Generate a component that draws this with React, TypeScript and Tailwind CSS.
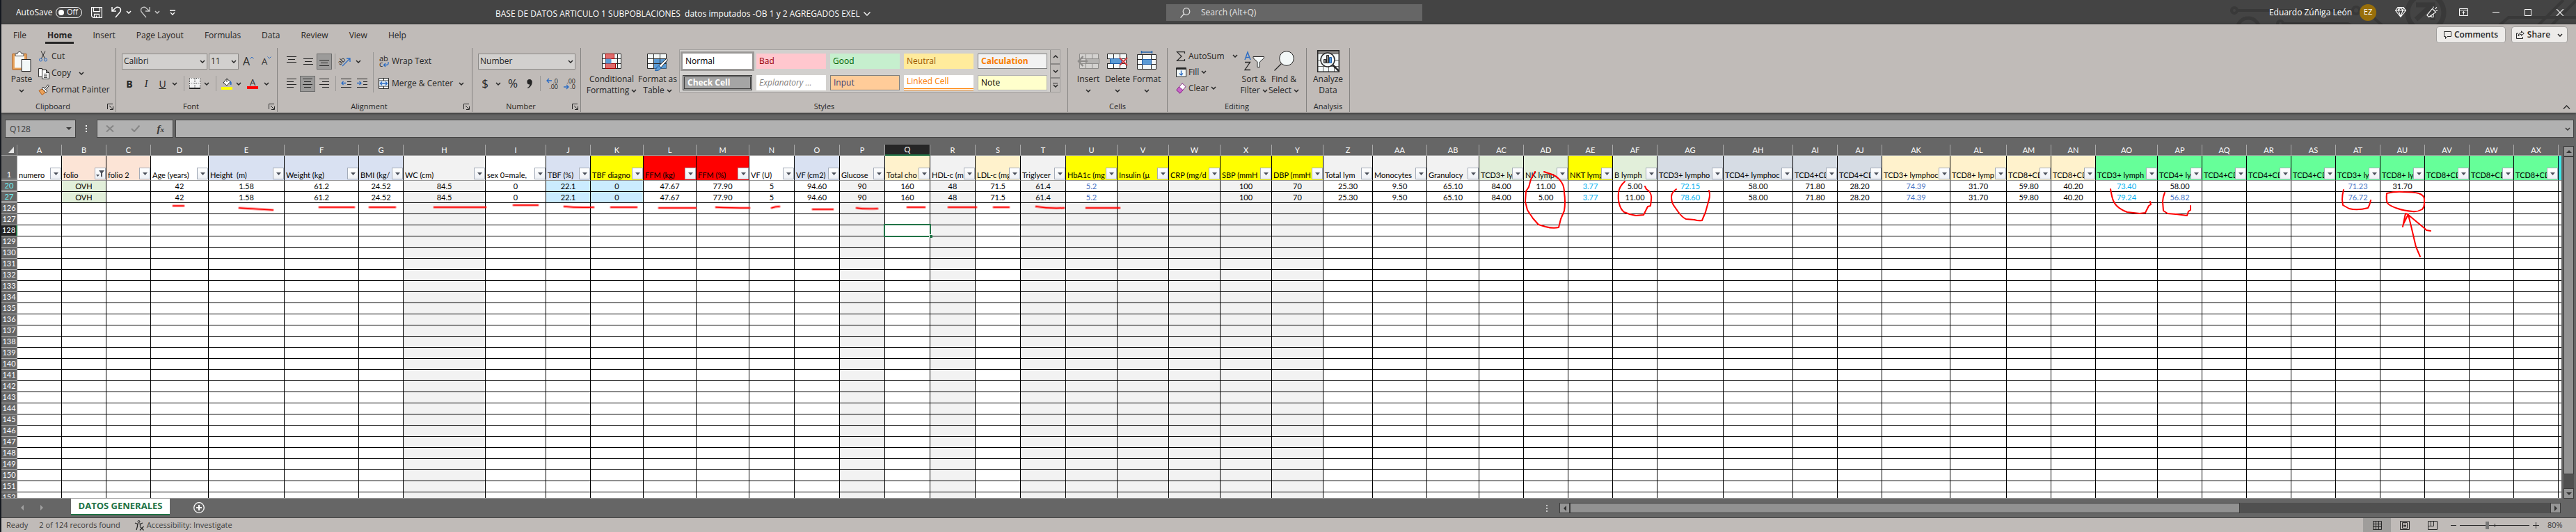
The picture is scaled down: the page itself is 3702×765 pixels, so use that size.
import type { ReactNode } from "react";

type Column = {
  id: string;
  w: number;
  head?: string;
  headBg?: string;
  values?: [string, string];
  cellBg?: string;
  dataBg?: string;
  color?: [string, string];
  active?: boolean;
  filtered?: boolean;
};

const ORANGE = "bg-[#fce4d6]";
const BLUE = "bg-[#d9e1f2]";
const GRAY = "bg-[#f2f2f2]";
const YELLOW = "bg-[#ffff00]";
const RED = "bg-[#ff0000]";
const CREAM = "bg-[#fff2cc]";
const MINT = "bg-[#e2efda]";
const SLATE = "bg-[#d6dce4]";
const GREEN = "bg-[#66ff99]";
const SKY = "bg-[#cbecff]";
const K = "text-black";
const INDIGO = "text-[#4472c4]";
const CYAN = "text-[#00b0f0]";

const columns: Column[] = [
  { id: "A", w: 64, head: "numero" },
  { id: "B", w: 64, head: "folio", headBg: ORANGE, values: ["OVH", "OVH"], dataBg: MINT, filtered: true },
  { id: "C", w: 64, head: "folio 2", headBg: ORANGE },
  { id: "D", w: 83, head: "Age (years)", values: ["42", "42"] },
  { id: "E", w: 109, head: "Height  (m)", headBg: BLUE, values: ["1.58", "1.58"] },
  { id: "F", w: 107, head: "Weight (kg)", headBg: BLUE, values: ["61.2", "61.2"] },
  { id: "G", w: 64, head: "BMI (kg/", headBg: BLUE, values: ["24.52", "24.52"] },
  { id: "H", w: 118, head: "WC (cm)", headBg: GRAY, values: ["84.5", "84.5"], cellBg: GRAY },
  { id: "I", w: 87, head: "sex 0=male,", values: ["0", "0"] },
  { id: "J", w: 64, head: "TBF (%)", headBg: BLUE, values: ["22.1", "22.1"], dataBg: SKY },
  { id: "K", w: 76, head: "TBF diagno", headBg: YELLOW, values: ["0", "0"], dataBg: SKY },
  { id: "L", w: 76, head: "FFM (kg)", headBg: RED, values: ["47.67", "47.67"] },
  { id: "M", w: 76, head: "FFM (%)", headBg: RED, values: ["77.90", "77.90"] },
  { id: "N", w: 65, head: "VF (U)", values: ["5", "5"] },
  { id: "O", w: 65, head: "VF (cm2)", headBg: BLUE, values: ["94.60", "94.60"] },
  { id: "P", w: 65, head: "Glucose", headBg: GRAY, values: ["90", "90"], cellBg: GRAY },
  { id: "Q", w: 65, head: "Total cho", headBg: CREAM, values: ["160", "160"], active: true },
  { id: "R", w: 65, head: "HDL-c (m", headBg: GRAY, values: ["48", "48"], cellBg: GRAY },
  { id: "S", w: 65, head: "LDL-c (mg", headBg: CREAM, values: ["71.5", "71.5"] },
  { id: "T", w: 65, head: "Triglycer", headBg: GRAY, values: ["61.4", "61.4"], cellBg: GRAY },
  { id: "U", w: 74, head: "HbA1c (mg", headBg: YELLOW, values: ["5.2", "5.2"], cellBg: GRAY, dataBg: "bg-white", color: [INDIGO, INDIGO] },
  { id: "V", w: 74, head: "Insulin (µ", headBg: YELLOW, cellBg: GRAY },
  { id: "W", w: 74, head: "CRP (mg/d", headBg: YELLOW, cellBg: GRAY },
  { id: "X", w: 74, head: "SBP (mmH", headBg: YELLOW, values: ["100", "100"], cellBg: GRAY },
  { id: "Y", w: 74, head: "DBP (mmH", headBg: YELLOW, values: ["70", "70"], cellBg: GRAY },
  { id: "Z", w: 71, head: "Total lym", headBg: GRAY, values: ["25.30", "25.30"] },
  { id: "AA", w: 78, head: "Monocytes", headBg: GRAY, values: ["9.50", "9.50"] },
  { id: "AB", w: 75, head: "Granulocy", headBg: GRAY, values: ["65.10", "65.10"] },
  { id: "AC", w: 64, head: "TCD3+ ly", headBg: MINT, values: ["84.00", "84.00"] },
  { id: "AD", w: 64, head: "NK lymp", headBg: MINT, values: ["11.00", "5.00"] },
  { id: "AE", w: 64, head: "NKT lymp", headBg: YELLOW, values: ["3.77", "3.77"], color: [CYAN, CYAN] },
  { id: "AF", w: 64, head: "B lymph", headBg: MINT, values: ["5.00", "11.00"] },
  { id: "AG", w: 95, head: "TCD3+ lympho", headBg: SLATE, values: ["72.15", "78.60"], color: [CYAN, CYAN] },
  { id: "AH", w: 100, head: "TCD4+ lymphoc", headBg: SLATE, values: ["58.00", "58.00"] },
  { id: "AI", w: 64, head: "TCD4+CD", headBg: SLATE, values: ["71.80", "71.80"] },
  { id: "AJ", w: 64, head: "TCD4+CD", headBg: SLATE, values: ["28.20", "28.20"] },
  { id: "AK", w: 98, head: "TCD3+ lymphoc", headBg: CREAM, values: ["74.39", "74.39"], color: [INDIGO, INDIGO] },
  { id: "AL", w: 81, head: "TCD8+ lymp", headBg: CREAM, values: ["31.70", "31.70"] },
  { id: "AM", w: 64, head: "TCD8+CD", headBg: CREAM, values: ["59.80", "59.80"] },
  { id: "AN", w: 64, head: "TCD8+CD", headBg: CREAM, values: ["40.20", "40.20"] },
  { id: "AO", w: 89, head: "TCD3+ lymph", headBg: GREEN, values: ["73.40", "79.24"], color: [CYAN, CYAN] },
  { id: "AP", w: 64, head: "TCD4+ ly", headBg: GREEN, values: ["58.00", "56.82"], color: [K, INDIGO] },
  { id: "AQ", w: 64, head: "TCD4+CD", headBg: GREEN },
  { id: "AR", w: 64, head: "TCD4+CD", headBg: GREEN },
  { id: "AS", w: 64, head: "TCD4+CD", headBg: GREEN },
  { id: "AT", w: 64, head: "TCD3+ ly", headBg: GREEN, values: ["71.23", "76.72"], color: [INDIGO, INDIGO] },
  { id: "AU", w: 64, head: "TCD8+ ly", headBg: GREEN, values: ["31.70", ""] },
  { id: "AV", w: 64, head: "TCD8+CD", headBg: GREEN },
  { id: "AW", w: 64, head: "TCD8+CD", headBg: GREEN },
  { id: "AX", w: 64, head: "TCD8+CD", headBg: GREEN },
];

const emptyRows = Array.from({ length: 27 }, (_, i) => 126 + i);

/* ---------- small building blocks ---------- */

function Chevron({ className = "" }: { className?: string }) {
  return (
    <svg className={`h-[5px] w-[8px] shrink-0 ${className}`} viewBox="0 0 8 5" fill="none" stroke="currentColor" strokeWidth="1.5">
      <path d="M1 1l3 3 3-3" />
    </svg>
  );
}

function Ico({ size, box, children }: { size: string; box: string; children: ReactNode }) {
  return (
    <svg className={`shrink-0 overflow-visible ${size}`} viewBox={box} fill="none" stroke="#262626" strokeWidth="1">
      {children}
    </svg>
  );
}

function Tool({ label, w, selected, children }: { label: string; w: string; selected?: boolean; children: ReactNode }) {
  return (
    <button
      type="button"
      aria-label={label}
      className={`flex h-[23px] shrink-0 items-center justify-center ${w} ${selected ? "border border-[#6a6a6a] bg-[#9c9b9a]" : ""}`}
    >
      {children}
    </button>
  );
}

function Rule({ w }: { w: string }) {
  return (
    <span className={`flex h-[22px] shrink-0 justify-center ${w}`}>
      <span className="w-px bg-[#9a9896]" />
    </span>
  );
}

function Group({ name, w, launcher, children }: { name: string; w: string; launcher?: boolean; children: ReactNode }) {
  return (
    <section aria-label={name} className={`flex shrink-0 flex-col border-r border-[#858381] ${w}`}>
      <div className="h-[76px]">{children}</div>
      <div className="flex h-4 items-center">
        <span className="flex-1 text-center text-[11px] leading-4">{name}</span>
        {launcher && (
          <button type="button" aria-label={`${name} settings`} className="flex w-4 justify-center">
            <Ico size="h-[9px] w-[9px]" box="0 0 9 9">
              <path d="M.5 8V.5H8M3 3l5 5M8.500 4v4.500H4" />
            </Ico>
          </button>
        )}
      </div>
    </section>
  );
}

function Big({ w, lines, icon, chevron = "none" }: { w: string; lines: string[]; icon: ReactNode; chevron?: "none" | "inline" | "below" }) {
  return (
    <button type="button" className={`flex shrink-0 flex-col items-center ${w}`}>
      <span className="flex h-[37px] items-center justify-center">{icon}</span>
      {lines.map((line, i) => (
        <span key={line} className="flex h-4 items-center gap-[3px] text-[12px] leading-4 whitespace-nowrap">
          {line}
          {chevron === "inline" && i === lines.length - 1 && <Chevron />}
        </span>
      ))}
      {chevron === "below" && (
        <span className="flex h-4 items-center">
          <Chevron />
        </span>
      )}
    </button>
  );
}

function Picker({ label, value, w }: { label: string; value: string; w: string }) {
  return (
    <div className={`relative flex shrink-0 items-center ${w}`}>
      <select aria-label={label} defaultValue={value} className="h-[23px] w-full appearance-none border border-[#8a8886] bg-[#d2d0ce] pl-[2px] text-[12px] text-[#262626]">
        <option>{value}</option>
      </select>
      <Chevron className="pointer-events-none absolute right-[3px]" />
    </div>
  );
}

/* ---------- title bar ---------- */

function TitleBar() {
  return (
    <header className="relative flex h-[35px] shrink-0 items-center bg-[#444444] text-[12px] text-white">
      <svg className="pointer-events-none absolute top-0 right-0 h-full w-[500px]" viewBox="0 0 500 35" fill="none" stroke="#393939" strokeWidth="4">
        <circle cx="9" cy="15" r="4" />
        <path d="M13 15h167M187 15h10l24 21" />
        <circle cx="184" cy="15" r="5" />
        <circle cx="29" cy="42" r="16" strokeWidth="5" />
        <circle cx="75" cy="34" r="4" />
        <path d="M80 34h92l6 3" />
        <circle cx="284" cy="18" r="26" strokeWidth="7" />
        <path d="M270 28l22-20M270 7h24v22" strokeWidth="7" />
        <path d="M388 38l15-13h97M444 38l38-38M463 38l38-38" />
      </svg>
      <div className="flex items-center pl-[21px]">
        <label htmlFor="autosave" className="w-[57px]">AutoSave</label>
        <button id="autosave" type="button" role="switch" aria-checked="false" className="flex h-4 w-[38px] items-center justify-between rounded-full border border-white pr-[5px] pl-[3px] text-[11px]">
          <span className="h-2 w-2 rounded-full bg-white" />
          Off
        </button>
        <button type="button" aria-label="Save" className="ml-[13px]">
          <svg className="h-4 w-4" viewBox="0 0 16 16" fill="none" stroke="#fff" strokeWidth="1.200">
            <path d="M.6.6h14.800v14.800H3L.6 13zM3.500.6v6h9v-6M4.500 15.400v-5h7v5M7.500 12.500v3" />
          </svg>
        </button>
        <button type="button" aria-label="Undo" className="ml-[13px] flex items-center gap-[6px]">
          <svg className="h-[17px] w-[15px]" viewBox="0 0 15 17" fill="none" stroke="#fff" strokeWidth="1.500">
            <path d="M1 1v6h6M1 7l5-4.500c3-2.500 7.500-.8 7.500 3 0 1.800-.8 2.800-2 4L6 16" />
          </svg>
          <Chevron />
        </button>
        <button type="button" aria-label="Redo" className="ml-[12px] flex items-center gap-[6px] text-[#c8c8c8]">
          <svg className="h-[17px] w-[15px]" viewBox="0 0 15 17" fill="none" stroke="currentColor" strokeWidth="1.300">
            <path d="M14 1v6H8M14 7L9 2.500C6 0 1.500 1.700 1.500 5.500c0 1.800.8 2.800 2 4L9 16" />
          </svg>
          <Chevron />
        </button>
        <button type="button" aria-label="Customize toolbar" className="ml-[14px]">
          <svg className="h-[8px] w-[8px]" viewBox="0 0 8 8" fill="none" stroke="#fff" strokeWidth="1.300">
            <path d="M0 1h8M1 4l3 3 3-3" />
          </svg>
        </button>
      </div>
      <h1 className="ml-[460px] flex items-center gap-[5px] pt-1 text-[12px] whitespace-pre">
        BASE DE DATOS ARTICULO 1 SUBPOBLACIONES  datos imputados -OB 1 y 2 AGREGADOS EXEL
        <svg className="h-[6px] w-[10px]" viewBox="0 0 10 6" fill="none" stroke="#fff" strokeWidth="1.300">
          <path d="M.5.5L5 5 9.500.5" />
        </svg>
      </h1>
      <label className="absolute top-[6px] left-[1674px] flex h-6 w-[368px] items-center bg-[#666666] pl-[20px]">
        <svg className="h-[15px] w-[15px]" viewBox="0 0 15 15" fill="none" stroke="#e4e4e4" strokeWidth="1.200">
          <circle cx="9" cy="5.500" r="4.800" />
          <path d="M5.500 9L.5 14.500" />
        </svg>
        <input aria-label="Search" placeholder="Search (Alt+Q)" className="ml-[15px] w-[200px] bg-transparent text-[12px] outline-none placeholder:text-[#e4e4e4]" />
      </label>
      <div className="relative ml-auto flex items-center pr-[18px]">
        <span>Eduardo Zúñiga León</span>
        <span className="ml-[11px] flex h-6 w-6 items-center justify-center rounded-full bg-[#986f0b] text-[11px]">EZ</span>
        <button type="button" aria-label="Premium" className="ml-[27px]">
          <svg className="h-[15px] w-4" viewBox="0 0 16 15" fill="none" stroke="#fff" strokeWidth="1.100">
            <path d="M4 .6h8L15.400 5 8 14.300.6 5zM.6 5h14.800M5 5l3 9 3-9-3-4.400zM4 .6L5 5M12 .6L11 5" />
          </svg>
        </button>
        <button type="button" aria-label="What's new" className="ml-[29px]">
          <svg className="h-[17px] w-4" viewBox="0 0 16 17" fill="none" stroke="#fff" strokeWidth="1.100">
            <path d="M8.500 3.500l5 5L3.500 15.500.8 12.800zM7 13v2.500h3V11M10 2.500V.5M12.500 3.800l2.500-2.300M13.500 6.500h2.500" />
          </svg>
        </button>
        <button type="button" aria-label="Ribbon display options" className="ml-[31px]">
          <svg className="h-[11px] w-[13px]" viewBox="0 0 13 11" fill="none" stroke="#fff">
            <path d="M.5.5h12v10H.5zM.5 2.500h12M6.500 9V4.500M4.500 6.500l2-2 2 2" />
          </svg>
        </button>
        <button type="button" aria-label="Minimize" className="ml-[35px] flex h-4 items-center">
          <span className="h-px w-[10px] bg-white" />
        </button>
        <button type="button" aria-label="Restore" className="ml-[36px] h-[10px] w-[10px] border border-white" />
        <button type="button" aria-label="Close" className="ml-[36px]">
          <svg className="h-[10px] w-[10px]" viewBox="0 0 10 10" fill="none" stroke="#fff" strokeWidth="1.200">
            <path d="M0 0l10 10M10 0L0 10" />
          </svg>
        </button>
      </div>
    </header>
  );
}

/* ---------- ribbon ---------- */

const tabs = ["File", "Home", "Insert", "Page Layout", "Formulas", "Data", "Review", "View", "Help"];

function Tabs() {
  return (
    <div className="flex h-[34px] items-start pr-3">
      <nav className="flex gap-[24px] pl-[14px]">
        {tabs.map((t) => (
          <a key={t} href="#sheet" className={`h-[28px] px-[3px] pt-[6px] text-[12px] leading-[19px] ${t === "Home" ? "border-b-[3px] border-[#262626] font-bold" : ""}`}>
            {t}
          </a>
        ))}
      </nav>
      <div className="ml-auto flex gap-2 pt-[3px]">
        <button type="button" className="flex h-6 w-[100px] items-center justify-center gap-1 rounded-sm border border-[#a19f9d] bg-[#edebe9] text-[12px] font-semibold">
          <Ico size="h-[11px] w-[11px]" box="0 0 11 11">
            <path d="M.5.5h10v7H5l-2.500 3v-3h-2z" />
          </Ico>
          Comments
        </button>
        <button type="button" className="flex h-6 w-[81px] items-center justify-center gap-1 rounded-sm border border-[#a19f9d] bg-[#edebe9] text-[12px] font-semibold">
          <Ico size="h-[12px] w-[12px]" box="0 0 12 12">
            <path d="M3 4H.5v7.500h9V9M7.500.8L11.300 4 7.500 7.200V5.500C5.500 5.500 4 6 3 8c.2-3 1.800-5 4.500-5z" />
          </Ico>
          Share
          <Chevron className="ml-[6px]" />
        </button>
      </div>
    </div>
  );
}

function Lines({ rows }: { rows: [number, number, number][] }) {
  return (
    <Ico size="h-[14px] w-[14px]" box="0 0 14 14">
      {rows.map(([x1, x2, y]) => (
        <path key={y} d={`M${x1} ${y}.5H${x2}`} />
      ))}
    </Ico>
  );
}

function ClipboardGroup() {
  return (
    <Group name="Clipboard" w="w-[165px]" launcher>
      <div className="flex pl-[14px]">
        <Big
          w="w-[30px]"
          lines={["Paste"]}
          chevron="below"
          icon={
            <Ico size="h-[30px] w-[28px]" box="0 0 28 30">
              <path d="M1 4.500h20v22.500H1z" fill="#e8a35c" stroke="#b35a12" />
              <path d="M4 7.500h14v17H4z" fill="#f6f8f7" stroke="none" />
              <path d="M5 7.500V4.500h3c0-4 6-4 6 0h3v3z" fill="#fff" stroke="#444" />
              <path d="M14 12.500h13v17H14z" fill="#f3f8f7" stroke="#222" />
            </Ico>
          }
        />
        <div className="ml-[9px] flex flex-col text-[12px]">
          <button type="button" className="flex h-6 items-center gap-[5px]">
            <Ico size="h-[16px] w-[14px]" box="0 0 14 16">
              <path d="M4 .5l5.500 10.500M10 .5L4.500 11" />
              <circle cx="3.500" cy="13" r="2" stroke="#2b6cc4" />
              <circle cx="10.500" cy="13" r="2" stroke="#2b6cc4" />
            </Ico>
            Cut
          </button>
          <button type="button" className="flex h-6 items-center gap-[3px]">
            <Ico size="h-[17px] w-[16px]" box="0 0 16 17">
              <path d="M.6 1.500h5v12h-5z" fill="#fff" />
              <path d="M5.500 3.500h6l4 4v9h-10z" fill="#fff" />
              <path d="M11.500 3.500v4h4M8 9.500h5M8 12h5M8 14.300h5" />
            </Ico>
            Copy
            <Chevron className="ml-[8px]" />
          </button>
          <button type="button" className="flex h-6 items-center gap-[3px] whitespace-nowrap">
            <Ico size="h-[16px] w-[16px]" box="0 0 16 16">
              <path d="M1 9.500l5-3 4.500 5-5 4z" fill="#e9a15a" stroke="#b35a12" />
              <path d="M5 6l2-2 6 6-2 2z" fill="#fff" />
              <path d="M9.500 6L14 .8l1.500 1.500L11 7.500" fill="#fff" />
            </Ico>
            Format Painter
          </button>
        </div>
      </div>
    </Group>
  );
}

function FontGroup() {
  return (
    <Group name="Font" w="w-[232px]" launcher>
      <div className="pt-[3px]">
        <div className="flex h-8 items-center pl-[8px]">
          <Picker label="Font family" value="Calibri" w="w-[123px]" />
          <span className="w-[2px]" />
          <Picker label="Font size" value="11" w="w-[43px]" />
          <Tool label="Increase font size" w="w-[28px]">
            <span className="text-[16px] leading-4">A</span>
            <Ico size="h-[4px] w-[6px] self-start mt-1" box="0 0 6 4">
              <path d="M.5 3.500L3 1l2.500 2.500" stroke="#2b6cc4" />
            </Ico>
          </Tool>
          <Tool label="Decrease font size" w="w-[24px]">
            <span className="text-[13px] leading-4">A</span>
            <Ico size="h-[4px] w-[6px] self-start mt-1" box="0 0 6 4">
              <path d="M.5.500L3 3l2.500-2.500" stroke="#2b6cc4" />
            </Ico>
          </Tool>
        </div>
        <div className="flex h-8 items-center pl-[7px] text-[14px]">
          <Tool label="Bold" w="w-[24px]"><b>B</b></Tool>
          <Tool label="Italic" w="w-[24px]"><i className="font-['Liberation_Serif',serif]">I</i></Tool>
          <Tool label="Underline" w="w-[23px]"><u>U</u></Tool>
          <Tool label="Underline options" w="w-[12px]"><Chevron /></Tool>
          <Rule w="w-[14px]" />
          <Tool label="Borders" w="w-[18px]">
            <Ico size="h-[16px] w-[16px]" box="0 0 16 16">
              <path d="M0 0h16v16H0z" fill="#f3f3f3" stroke="none" />
              <path d="M.5 0v15M15.500 0v15M8 0v15M0 .5h16M0 7.500h16" strokeDasharray="1 1.500" />
              <path d="M0 15h16" strokeWidth="2" />
            </Ico>
          </Tool>
          <Tool label="Border options" w="w-[16px]"><Chevron /></Tool>
          <Rule w="w-[10px]" />
          <Tool label="Fill color" w="w-[22px]">
            <Ico size="h-[17px] w-[16px]" box="0 0 16 17">
              <path d="M8 1L3 7l5 4 5-5.500zM8 1v5" fill="#fff" />
              <path d="M12 5c2 0 2 3 1.500 5" stroke="#2b6cc4" strokeWidth="2" />
              <path d="M0 13h16v4H0z" fill="#ffff00" stroke="none" />
            </Ico>
          </Tool>
          <Tool label="Fill options" w="w-[12px]"><Chevron /></Tool>
          <Tool label="Font color" w="w-[28px]">
            <span className="flex w-4 flex-col items-center">
              <span className="text-[13px] leading-[12px]">A</span>
              <span className="h-1 w-4 bg-[#ff0000]" />
            </span>
          </Tool>
          <Tool label="Font color options" w="w-[12px]"><Chevron /></Tool>
        </div>
      </div>
    </Group>
  );
}

function AlignmentGroup() {
  return (
    <Group name="Alignment" w="w-[280px]" launcher>
      <div className="flex pt-[3px]">
        <div className="w-[137px]">
          <div className="flex h-8 items-center pl-[8px]">
            <Tool label="Top align" w="w-[24px]"><Lines rows={[[0, 14, 0], [2, 12, 4], [0, 14, 8]]} /></Tool>
            <Tool label="Middle align" w="w-[24px]"><Lines rows={[[0, 14, 3], [2, 12, 7], [0, 14, 11]]} /></Tool>
            <Tool label="Bottom align" w="w-[22px]" selected><Lines rows={[[0, 14, 5], [2, 12, 9], [0, 14, 13]]} /></Tool>
            <Rule w="w-[8px]" />
            <Tool label="Orientation" w="w-[21px]">
              <Ico size="h-[16px] w-[17px]" box="0 0 17 16">
                <text x="-2" y="11" transform="rotate(-45 4 8)" fontSize="10" fill="#262626" stroke="none">ab</text>
                <path d="M5 15L15.500 4.500M11 4h5v5" stroke="#2b6cc4" strokeWidth="1.300" />
              </Ico>
            </Tool>
            <Tool label="Orientation options" w="w-[18px]"><Chevron /></Tool>
          </div>
          <div className="flex h-8 items-center pl-[8px]">
            <Tool label="Align left" w="w-[24px]"><Lines rows={[[0, 14, 0], [0, 10, 4], [0, 14, 8], [0, 10, 12]]} /></Tool>
            <Tool label="Center" w="w-[22px]" selected><Lines rows={[[0, 14, 0], [2, 12, 4], [0, 14, 8], [2, 12, 12]]} /></Tool>
            <Tool label="Align right" w="w-[26px]"><Lines rows={[[0, 14, 0], [4, 14, 4], [0, 14, 8], [4, 14, 12]]} /></Tool>
            <Rule w="w-[6px]" />
            <Tool label="Decrease indent" w="w-[24px]">
              <Ico size="h-[14px] w-[15px]" box="0 0 15 14">
                <path d="M0 .5h15M9 4.500h6M9 8.500h6M0 12.500h15" />
                <path d="M7 6.500H1M3.500 4L1 6.500 3.500 9" stroke="#2b6cc4" strokeWidth="1.300" />
              </Ico>
            </Tool>
            <Tool label="Increase indent" w="w-[22px]">
              <Ico size="h-[14px] w-[15px]" box="0 0 15 14">
                <path d="M0 .5h15M9 4.500h6M9 8.500h6M0 12.500h15" />
                <path d="M0 6.500h6M3.500 4L6 6.500 3.500 9" stroke="#2b6cc4" strokeWidth="1.300" />
              </Ico>
            </Tool>
          </div>
        </div>
        <div className="mt-[3px] h-[58px] w-px bg-[#9a9896]" />
        <div className="pl-[7px] text-[12px]">
          <button type="button" className="flex h-8 items-center gap-1 whitespace-nowrap">
            <Ico size="h-[17px] w-[15px]" box="0 0 15 17">
              <text x="1" y="8" fontSize="11" fill="#262626" stroke="none">ab</text>
              <text x="1" y="16" fontSize="11" fill="#262626" stroke="none">c</text>
              <path d="M14 9v2c0 2-1 2.500-3 2.500H8M10 11l-2.500 2.500L10 16" stroke="#2b6cc4" strokeWidth="1.300" />
            </Ico>
            Wrap Text
          </button>
          <button type="button" className="flex h-8 items-center gap-1 whitespace-nowrap">
            <Ico size="h-[16px] w-[15px]" box="0 0 15 16">
              <path d="M.5.5h14v15H.5z" fill="#f4f8f8" />
              <path d="M.5 4h14M.5 12h14M7.500.5V4M7.500 12v3.500" />
              <path d="M1 4.500h13v7H1z" fill="#dbe9f6" stroke="none" />
              <path d="M2.500 8h10M5 5.500L2.500 8 5 10.500M10 5.500L12.500 8 10 10.500" stroke="#2b6cc4" strokeWidth="1.300" />
            </Ico>
            Merge &amp; Center
            <Chevron className="ml-1" />
          </button>
        </div>
      </div>
    </Group>
  );
}

function NumberGroup() {
  return (
    <Group name="Number" w="w-[156px]" launcher>
      <div className="pt-[3px]">
        <div className="flex h-8 items-center pl-[8px]">
          <Picker label="Number format" value="Number" w="w-[140px]" />
        </div>
        <div className="flex h-8 items-center pl-[6px]">
          <Tool label="Currency" w="w-[24px]"><span className="text-[17px]">$</span></Tool>
          <Tool label="Currency options" w="w-[14px]"><Chevron /></Tool>
          <Tool label="Percent" w="w-[28px]"><span className="text-[17px]">%</span></Tool>
          <Tool label="Comma" w="w-[20px]">
            <svg className="h-[13px] w-[8px]" viewBox="0 0 8 13" fill="#262626">
              <path d="M4 0a3.700 3.700 0 013.800 4C7.800 8 5 12 1.500 13l-.5-1c2-1 3.200-2.700 3.400-4.500A3.700 3.700 0 114 0z" />
            </svg>
          </Tool>
          <Rule w="w-[10px]" />
          {[
            { label: "Increase decimal", top: ".0", bottom: ".00", d: "M8 4H1M4 1L1 4l3 3" },
            { label: "Decrease decimal", top: ".00", bottom: ".0", d: "M0 13h7M4 10l3 3-3 3" },
          ].map((it) => (
            <Tool key={it.label} label={it.label} w="w-[25px]">
              <Ico size="h-[17px] w-[17px]" box="0 0 17 17">
                <text x="17" y="8" textAnchor="end" fontSize="9" fill="#262626" stroke="none">{it.top}</text>
                <text x="17" y="16" textAnchor="end" fontSize="9" fill="#262626" stroke="none">{it.bottom}</text>
                <path d={it.d} stroke="#2b6cc4" strokeWidth="1.300" />
              </Ico>
            </Tool>
          ))}
        </div>
      </div>
    </Group>
  );
}

const GRID_LINES = "M.5.500h27v21H.5zM.5 7.500h27M.5 14.500h27";

const cellStyles = [
  { name: "Normal", cls: "bg-white text-black outline outline-[3px] outline-[#9a9896]" },
  { name: "Bad", cls: "bg-[#ffc7ce] text-[#9c0006]" },
  { name: "Good", cls: "bg-[#c6efce] text-[#006100]" },
  { name: "Neutral", cls: "bg-[#ffeb9c] text-[#9c5700]" },
  { name: "Calculation", cls: "border border-[#7f7f7f] bg-[#f2f2f2] font-bold text-[#fa7d00]" },
  { name: "Check Cell", cls: "border-[3px] border-double border-[#3f3f3f] bg-[#a5a5a5] font-bold text-white" },
  { name: "Explanatory ...", cls: "bg-white italic text-[#7f7f7f]" },
  { name: "Input", cls: "border border-[#7f7f7f] bg-[#ffcc99] text-[#3f3f76]" },
  { name: "Linked Cell", cls: "border-b-[3px] border-double border-[#ff8001] bg-white text-[#fa7d00]" },
  { name: "Note", cls: "border border-[#b2b2b2] bg-[#ffffcc] text-black" },
];

function StylesGroup() {
  return (
    <Group name="Styles" w="w-[700px]">
      <div className="flex pl-[6px]">
        <Big
          w="w-[76px]"
          lines={["Conditional", "Formatting"]}
          chevron="inline"
          icon={
            <Ico size="h-[22px] w-[28px]" box="0 0 28 22">
              <path d={GRID_LINES} fill="#f3f8f8" />
              <path d="M5.500.5v21M22.500.5v21" />
              <path d="M5.500.5h12v7h-12zM5.500 14.500h14v7h-14z" fill="#e06b6b" stroke="#a80000" />
              <path d="M5.500 7.500h8v7h-8z" fill="#5a9bd5" stroke="none" />
            </Ico>
          }
        />
        <Big
          w="w-[56px]"
          lines={["Format as", "Table"]}
          chevron="inline"
          icon={
            <Ico size="h-[28px] w-[30px]" box="0 0 30 28">
              <path d="M.5 3.500h27v21H.5z" fill="#f3f8f8" />
              <path d="M9.500 10.500h18v14h-18z" fill="#5a9bd5" stroke="none" />
              <path d="M.5 10.500h27M.5 17.500h27M9.500 3.500v21M18.500 3.500v21" />
              <path d="M27.500 10.500l2 1.500L20 23l-3-2.500z" fill="#fff" />
              <path d="M17 20.500l3 2.500c-1 4-5 5-9 4.500 2.500-1.500 2-5.500 6-7z" fill="#5a9bd5" stroke="#1f5fa8" />
            </Ico>
          }
        />
        <div className="ml-[3px] mt-[2px] flex h-[62px] border border-[#a19f9d] bg-[#d2d0ce]">
          <div className="grid grid-cols-5 gap-[6px] pt-[5px] pr-[4px] pl-[4px]">
            {cellStyles.map((s) => (
              <button key={s.name} type="button" className={`flex h-[22px] w-[100px] items-center pl-[4px] text-[12px] whitespace-nowrap ${s.cls}`}>
                {s.name}
              </button>
            ))}
          </div>
          <div className="flex w-[14px] flex-col divide-y-2 divide-[#8a8886] border-l border-[#8a8886] bg-[#bfbbb8]">
            <button type="button" aria-label="Previous styles" className="flex flex-1 items-center justify-center"><Chevron className="rotate-180" /></button>
            <button type="button" aria-label="Next styles" className="flex flex-1 items-center justify-center"><Chevron /></button>
            <button type="button" aria-label="More styles" className="flex flex-1 flex-col items-center justify-center gap-px"><span className="h-px w-[7px] bg-[#262626]" /><Chevron /></button>
          </div>
        </div>
      </div>
    </Group>
  );
}

function CellsGroup() {
  return (
    <Group name="Cells" w="w-[143px]">
      <div className="flex pl-[8px]">
        <Big
          w="w-[42px]"
          lines={["Insert"]}
          chevron="below"
          icon={
            <Ico size="h-[22px] w-[31px]" box="0 0 31 22">
              <g stroke="#8e8c8a">
                <path d="M2.500.5h27v21h-27zM2.500 7.500h27M2.500 14.500h27M11.500.5v21M20.500.5v21" fill="#d4d2d0" />
                <path d="M12 7.500h18.500v7H12z" fill="#b5b3b1" />
                <path d="M14 11H1M7.500 4L1 11l6.500 7" strokeWidth="2.500" />
              </g>
            </Ico>
          }
        />
        <Big
          w="w-[42px]"
          lines={["Delete"]}
          chevron="below"
          icon={
            <Ico size="h-[22px] w-[30px]" box="0 0 30 22">
              <path d={GRID_LINES} fill="#f3f8f8" />
              <path d="M9.500.5v21M18.500.5v21" />
              <path d="M0 8h4v6H0z" fill="#c0bbb8" stroke="none" />
              <path d="M4.500 7.500h16v7h-16z" fill="#5a9bd5" stroke="#1f5fa8" />
              <path d="M18 6l11 11M29 6L18 17" stroke="#d13438" strokeWidth="1.800" />
            </Ico>
          }
        />
        <Big
          w="w-[42px]"
          lines={["Format"]}
          chevron="below"
          icon={
            <Ico size="h-[30px] w-[28px]" box="0 0 28 30">
              <path d="M6.500 0v4M21.500 0v4M6.500 2h15" stroke="#1f5fa8" strokeWidth="1.500" />
              <path d="M.5 5.500h27v21H.5z" fill="#f3f8f8" />
              <path d="M.5 12.500h27M.5 19.500h27M7.500 5.500v21M20.500 5.500v21" />
              <path d="M7.500 12.500h13v7h-13z" fill="#5a9bd5" stroke="#1f5fa8" />
            </Ico>
          }
        />
      </div>
    </Group>
  );
}

function EditingGroup() {
  return (
    <Group name="Editing" w="w-[200px]">
      <div className="flex pl-[12px]">
        <div className="flex w-[90px] flex-col text-[12px]">
          <button type="button" className="flex h-[23px] items-center gap-[4px]">
            <Ico size="h-[14px] w-[14px]" box="0 0 14 14">
              <path d="M12.500 3V.6H1.500L8 7l-6.500 6.400h11V11" strokeWidth="1.200" />
            </Ico>
            AutoSum
            <Chevron className="ml-[7px]" />
          </button>
          <button type="button" className="flex h-[23px] items-center gap-[3px]">
            <Ico size="h-[14px] w-[15px]" box="0 0 15 14">
              <path d="M.5.5h14v13H.5z" fill="#f3f8f8" />
              <path d="M.5 2h14" strokeWidth="2" />
              <path d="M7.500 4.500V11M5 8.500L7.500 11 10 8.500" stroke="#2b6cc4" strokeWidth="1.300" />
            </Ico>
            Fill
            <Chevron />
          </button>
          <button type="button" className="flex h-[23px] items-center gap-[3px]">
            <Ico size="h-[16px] w-[15px]" box="0 0 15 16">
              <path d="M9 .8l5 4.700L6 15.200.8 10.500z" fill="#fff" stroke="#8a2a8a" />
              <path d="M4.500 6l5.500 4.600-4 4.600L.8 10.500z" fill="#c965c9" stroke="#8a2a8a" />
            </Ico>
            Clear
            <Chevron />
          </button>
        </div>
        <Big
          w="w-[44px]"
          lines={["Sort &", "Filter"]}
          chevron="inline"
          icon={
            <Ico size="h-[28px] w-[29px]" box="0 0 29 28">
              <path d="M1 12L5 1l4 11M2.500 8.500h5" stroke="#2b6cc4" strokeWidth="1.400" />
              <path d="M1 15.500h7.500L1 26.500h8" strokeWidth="1.300" />
              <path d="M13 7.500h15.500v2L22.500 15v7.500H19V15l-6-5.500z" fill="#f3f8f8" />
            </Ico>
          }
        />
        <Big
          w="w-[42px]"
          lines={["Find &", "Select"]}
          chevron="inline"
          icon={
            <Ico size="h-[29px] w-[29px]" box="0 0 29 29">
              <circle cx="18" cy="11" r="10.300" fill="#f3f8f8" />
              <path d="M10.500 18.500L.5 28.500" strokeWidth="1.300" />
            </Ico>
          }
        />
      </div>
    </Group>
  );
}

function AnalysisGroup() {
  return (
    <Group name="Analysis" w="w-[62px]">
      <div className="flex justify-center">
        <Big
          w="w-[50px]"
          lines={["Analyze", "Data"]}
          icon={
            <Ico size="h-[32px] w-[32px]" box="0 0 32 32">
              <path d="M.5.500h31v31H.5z" fill="#f3f8f8" />
              <path d="M.5.500h31v5H.5z" fill="#8a8886" stroke="none" />
              <path d="M.5 5.500h31M.5 14.500h31M.5 23.500h31M8.500 23.500v8M16.500 23.500v8M24.500 23.500v8" stroke="#666" />
              <path d="M.7.700h30.600v30.600H.7z" strokeWidth="1.500" />
              <circle cx="15" cy="14" r="10" fill="#f3f8f8" strokeWidth="1.500" />
              <path d="M22 21l9 9" strokeWidth="2.500" />
              <path d="M9.500 13.500h3v5h-3zM13.500 7.500h3v11h-3z" fill="#888" />
              <path d="M17.500 10.500h3v8h-3z" fill="#5a9bd5" stroke="#1f5fa8" />
            </Ico>
          }
        />
      </div>
    </Group>
  );
}

function Ribbon() {
  return (
    <div className="relative z-10 shrink-0 bg-[#c0bbb8] text-[#262626] shadow-[0_1px_4px_rgba(0,0,0,0.6)]">
      <Tabs />
      <div className="flex h-[93px] pb-[1px]">
        <ClipboardGroup />
        <FontGroup />
        <AlignmentGroup />
        <NumberGroup />
        <StylesGroup />
        <CellsGroup />
        <EditingGroup />
        <AnalysisGroup />
        <button type="button" aria-label="Collapse ribbon" className="mr-[8px] mb-[4px] ml-auto self-end">
          <svg className="h-[6px] w-[11px]" viewBox="0 0 11 6" fill="none" stroke="#262626" strokeWidth="1.300">
            <path d="M1 5.500L5.500 1 10 5.500" />
          </svg>
        </button>
      </div>
    </div>
  );
}

/* ---------- formula bar ---------- */

function FormulaBar() {
  return (
    <div className="flex h-[46px] shrink-0 items-start bg-[#666666] pt-[10px] pr-[3px] pl-[5px] text-[#3b3b3b]">
      <label className="relative flex w-[102px] items-center">
        <input aria-label="Name box" defaultValue="Q128" className="h-[26px] w-full border border-[#444] bg-[#b1b1b1] pl-[6px] text-[12px] outline-none" />
        <svg className="pointer-events-none absolute right-[6px] h-[4px] w-[8px]" viewBox="0 0 8 4" fill="#3b3b3b">
          <path d="M0 0h8L4 4z" />
        </svg>
      </label>
      <span className="flex h-[26px] w-[30px] flex-col items-center justify-center gap-[2px]">
        <span className="h-[2px] w-[2px] bg-white" />
        <span className="h-[2px] w-[2px] bg-white" />
        <span className="h-[2px] w-[2px] bg-white" />
      </span>
      <div className="flex h-[26px] w-[110px] items-center justify-around border border-[#444] bg-[#b1b1b1]">
        <button type="button" aria-label="Cancel">
          <svg className="h-[10px] w-[12px]" viewBox="0 0 12 10" fill="none" stroke="#858585" strokeWidth="2">
            <path d="M1 .5l10 9M11 .5l-10 9" />
          </svg>
        </button>
        <button type="button" aria-label="Enter">
          <svg className="h-[10px] w-[13px]" viewBox="0 0 13 10" fill="none" stroke="#858585" strokeWidth="2">
            <path d="M1 5l4 4 7.500-8.500" />
          </svg>
        </button>
        <button type="button" aria-label="Insert function" className="font-['Liberation_Serif',serif] text-[15px] leading-4 font-bold italic">
          f<span className="text-[11px]">x</span>
        </button>
      </div>
      <label className="relative ml-[3px] flex flex-1 items-center">
        <input aria-label="Formula bar" className="h-[26px] w-full border border-[#444] bg-[#b1b1b1] px-2 text-[12px] outline-none" />
        <Chevron className="pointer-events-none absolute right-[5px]" />
      </label>
    </div>
  );
}

/* ---------- sheet ---------- */

function FilterButton({ name, on }: { name: string; on?: boolean }) {
  return (
    <button type="button" aria-label={`Filter ${name}`} className="mb-px flex h-[17px] w-4 shrink-0 items-center justify-center border border-[#a3abb8] bg-linear-to-b from-white to-[#edf0f5]">
      {on ? (
        <svg className="h-[10px] w-[12px]" viewBox="0 0 12 10" fill="#4a4f5a">
          <path d="M4 0h8L9 4v6L7 8.500V4zM0 6h5L2.500 9z" />
        </svg>
      ) : (
        <svg className="h-[4px] w-[7px]" viewBox="0 0 7 4" fill="#4a4f5a">
          <path d="M0 0h7L3.500 4z" />
        </svg>
      )}
    </button>
  );
}

function RowHead({ n, filtered, active }: { n: number; filtered?: boolean; active?: boolean }) {
  const look = active
    ? "border-r-2 border-r-[#217346] bg-[#262626] text-white"
    : filtered
      ? "border-r border-r-[#999] bg-[#666666] text-[#6ff0f0]"
      : "border-r border-r-[#999] bg-[#666666] text-white";
  return (
    <th scope="row" className={`h-4 p-0 text-center text-[11px] leading-[14px] font-normal ${filtered ? "border-b-[3px] border-double border-b-[#b0b0b0]" : "border-b border-b-[#b0b0b0]"} ${look}`}>
      <div className={filtered ? "h-[13px]" : "h-[15px]"}>{n}</div>
    </th>
  );
}

function Sheet() {
  return (
    <table className="w-full table-fixed border-separate border-spacing-0 font-['Lato',sans-serif] text-[11px] text-black">
      <colgroup>
        <col className="w-[23px]" />
        {columns.map((c) => (
          <col key={c.id} style={{ width: c.w }} />
        ))}
        <col />
      </colgroup>
      <thead>
        <tr className="bg-[#666666] text-white">
          <th aria-label="Select all" className="h-4 border-r border-b border-[#999] p-0">
            <svg className="mr-1 ml-auto h-[9px] w-[8px]" viewBox="0 0 8 9" fill="#e6e6e6">
              <path d="M8 0v9H0z" />
            </svg>
          </th>
          {columns.map((c) => (
            <th key={c.id} scope="col" className={`h-4 border-r border-r-[#aaa] p-0 text-[11px] leading-[14px] font-normal ${c.active ? "border-b-2 border-b-[#217346] bg-[#262626]" : "border-b border-b-[#999]"}`}>
              {c.id}
            </th>
          ))}
          <th aria-hidden="true" className="border-b border-b-[#999] p-0" />
        </tr>
      </thead>
      <tbody className="bg-white">
        <tr>
          <th scope="row" className="h-[36px] border-r border-b-[3px] border-double border-r-[#999] border-b-[#b0b0b0] bg-[#666666] p-0 align-bottom text-[11px] leading-[13px] font-normal text-white">1</th>
          {columns.map((c) => (
            <td key={c.id} className={`h-[36px] border-r border-b border-r-black border-b-[#999] p-0 align-bottom ${c.headBg ?? "bg-white"}`}>
              <div className="flex items-end">
                <span className="w-0 flex-1 overflow-hidden pl-[2px] text-[11px] leading-[15px] whitespace-pre">{c.head}</span>
                <FilterButton name={c.id} on={c.filtered} />
              </div>
            </td>
          ))}
          <td className="border-b border-b-[#999] bg-[#40e8e8] p-0" />
        </tr>
        {[20, 27].map((n, r) => (
          <tr key={n}>
            <RowHead n={n} filtered />
            {columns.map((c) => (
              <td key={c.id} className={`h-4 border-r border-b border-black p-0 text-center leading-[15px] ${c.dataBg ?? c.cellBg ?? ""} ${c.color?.[r] ?? K}`}>
                {c.values?.[r]}
              </td>
            ))}
            <td className="border-b border-black p-0" />
          </tr>
        ))}
        {emptyRows.map((n) => (
          <tr key={n}>
            <RowHead n={n} active={n === 128} />
            {columns.map((c) => (
              <td key={c.id} className={`h-4 border-r border-b border-black p-0 ${c.cellBg ?? ""} ${c.active && n === 128 ? "relative" : ""}`}>
                {c.active && n === 128 && (
                  <span className="absolute -inset-[2px] border-2 border-[#217346]">
                    <span className="absolute -right-[4px] -bottom-[3px] h-[5px] w-[5px] border-t border-l border-white bg-[#217346]" />
                  </span>
                )}
              </td>
            ))}
            <td className="border-b border-black p-0" />
          </tr>
        ))}
      </tbody>
    </table>
  );
}

const underlines = [
  "M249 296h15", "M344 299l48 3", "M459 298h50", "M531 298h37", "M624 298h74", "M738 295h35",
  "M811 297q20 2 42 1", "M878 298h37", "M947 299h53", "M1029 298q20 1 48 1", "M1109 299q5-2 11-2",
  "M1168 301h29", "M1231 299q12 2 30 1", "M1304 298h25", "M1363 298h40", "M1428 298h22",
  "M1489 297q18 3 40 2", "M1561 299h48",
];

const circles = [
  "M2206 247L2200 258 2197 269 2193 275 2192 290 2195 302 2203 314 2211 323 2221 326Q2232 329 2240 327L2243 315 2248 303Q2250 290 2248 277 2248 268 2244 262 2240 255 2231 251L2219 247",
  "M2335 261Q2327 268 2326 277 2325 286 2327 293 2329 301 2334 305L2342 308 2351 310 2362 309 2365 303 2368 297 2372 296 2373 287Q2374 280 2370 275L2366 272 2364 268",
  "M2409 272Q2402 277 2402 283 2402 290 2405 295L2412 305Q2418 313 2423 315L2435 316Q2441 318 2446 317L2451 305 2456 287Q2458 280 2456 274",
  "M3033 272L3035 282Q3037 291 3042 296 3048 302 3057 305L3075 307 3083 306 3088 296 3091 294 3090 290",
  "M3111 277Q3108 284 3108 290L3109 303 3115 307Q3130 308 3143 310L3145 304 3148 302V296",
  "M3368 273Q3366 280 3366 287L3367 295 3376 300Q3388 303 3403 299L3405 295 3407 288",
  "M3430 278Q3442 275 3454 276 3468 276 3476 278 3484 281 3484 286V293Q3484 298 3481 301 3474 305 3467 304 3455 303 3446 300 3434 296 3431 292 3429 288 3430 278z",
  "M3453 326L3457 307 3461 308 3454 322M3461 309L3484 328 3487 331 3493 332M3461 309L3465 325 3472 355 3478 369",
];

function Ink() {
  return (
    <svg aria-hidden="true" className="pointer-events-none absolute inset-0 h-full w-full" fill="none" stroke="#ff0000" strokeLinecap="round" strokeLinejoin="round">
      <g transform="translate(-2 -208)">
        {underlines.map((d) => (
          <g key={d}>
            <path d={d} strokeWidth="4" opacity="0.35" />
            <path d={d} strokeWidth="1.500" />
          </g>
        ))}
        {circles.map((d) => (
          <path key={d} d={d} strokeWidth="2" />
        ))}
      </g>
    </svg>
  );
}

function Arrow({ dir }: { dir: string }) {
  return (
    <svg className="h-[8px] w-[8px]" viewBox="0 0 8 8" fill="currentColor">
      <path d={dir} />
    </svg>
  );
}
const UP = "M0 6h8L4 2z";
const DOWN = "M0 2h8L4 6z";
const LEFT = "M6 0v8L2 4z";
const RIGHT = "M2 0v8l4-4z";

function VerticalScroll() {
  return (
    <div className="flex w-[15px] shrink-0 flex-col bg-[#505050] text-[#333]">
      <button type="button" aria-label="Scroll up" className="flex h-[15px] items-center justify-center border border-[#3b3b3b] bg-[#969696]"><Arrow dir={UP} /></button>
      <div className="flex flex-1 flex-col pb-[20px]">
        <div className="flex-1 border border-[#3b3b3b] bg-[#929292]" />
      </div>
      <button type="button" aria-label="Scroll down" className="flex h-[15px] items-center justify-center border border-[#3b3b3b] bg-[#969696]"><Arrow dir={DOWN} /></button>
    </div>
  );
}

function SheetTabs() {
  return (
    <div className="flex h-[28px] shrink-0 items-start border-b border-[#444] bg-[#666666] text-[#a0a0a0]">
      <button type="button" aria-label="Previous sheet" className="mt-[9px] ml-[26px]"><Arrow dir={LEFT} /></button>
      <button type="button" aria-label="Next sheet" className="mt-[9px] ml-[20px]"><Arrow dir={RIGHT} /></button>
      <button type="button" className="ml-[38px] h-6 w-[142px] border-b-2 border-[#217346] bg-white text-[13px] font-bold whitespace-nowrap text-[#217346]">DATOS GENERALES</button>
      <button type="button" aria-label="Add sheet" className="mt-[5px] ml-[34px]">
        <svg className="h-4 w-4" viewBox="0 0 16 16" fill="none" stroke="#fff">
          <circle cx="8" cy="8" r="7.300" strokeWidth="1.300" />
          <path d="M8 4v8M4 8h8" strokeWidth="2" />
        </svg>
      </button>
      <div className="mt-[6px] mr-[22px] ml-auto flex">
        <span className="mr-[17px] flex h-[15px] flex-col items-center justify-center gap-[2px]">
          <span className="h-[2px] w-[2px] bg-[#c8c8c8]" />
          <span className="h-[2px] w-[2px] bg-[#c8c8c8]" />
          <span className="h-[2px] w-[2px] bg-[#c8c8c8]" />
        </span>
        <div className="flex h-[15px] w-[1439px] bg-[#505050] text-[#333]">
          <button type="button" aria-label="Scroll left" className="flex w-[15px] items-center justify-center border border-[#3b3b3b] bg-[#969696]"><Arrow dir={LEFT} /></button>
          <div className="flex-1 border border-[#3b3b3b] bg-[#929292]" />
          <div className="w-[446px]" />
          <button type="button" aria-label="Scroll right" className="flex w-[15px] items-center justify-center border border-[#3b3b3b] bg-[#969696]"><Arrow dir={RIGHT} /></button>
        </div>
      </div>
    </div>
  );
}

function StatusBar() {
  return (
    <footer className="flex h-5 shrink-0 items-center bg-[#c0bbb8] pr-[19px] pl-[7px] text-[11px] text-[#3b3b3b]">
      <span>Ready</span>
      <span className="ml-[16px]">2 of 124 records found</span>
      <button type="button" className="ml-[20px] flex items-center gap-1">
        <Ico size="h-[15px] w-[14px]" box="0 0 14 15">
          <circle cx="6.500" cy="2" r="1.500" />
          <path d="M1 4c3 1.500 8 1.500 11 0M4.500 5v4L3 14M8.500 5v3M8 9l5.500 5.500M13.500 9L8 14.500" strokeWidth="1.300" />
        </Ico>
        Accessibility: Investigate
      </button>
      <div className="ml-auto flex h-full items-center">
        <button type="button" aria-label="Normal view" className="flex h-full w-[40px] items-center justify-center bg-[#9f9d9b]">
          <Ico size="h-[13px] w-[13px]" box="0 0 13 13"><path d="M.5.5h12v12H.5zM4.500.5v12M8.500.5v12M.5 4.500h12M.5 8.500h12" /></Ico>
        </button>
        <button type="button" aria-label="Page layout view" className="flex h-full w-[40px] items-center justify-center">
          <Ico size="h-[13px] w-[14px]" box="0 0 14 13"><path d="M.5.5h13v12H.5zM3.500 2.500h7v8h-7zM5 4.500h4M5 6.500h4M5 8.500h4" /></Ico>
        </button>
        <button type="button" aria-label="Page break view" className="flex h-full w-[40px] items-center justify-center">
          <Ico size="h-[13px] w-[14px]" box="0 0 14 13"><path d="M.5.5h13v12H.5zM4.500.5v7M8.500.5v7M.5 7.500h8" /></Ico>
        </button>
        <button type="button" aria-label="Zoom out" className="ml-[6px] flex h-full w-[8px] items-center"><span className="h-px w-full bg-[#262626]" /></button>
        <div className="relative ml-[5px] flex h-full w-[100px] items-center">
          <span className="absolute left-1/2 h-[5px] w-px bg-[#262626]" />
          <input aria-label="Zoom" type="range" min="0" max="100" defaultValue="39" className="h-px w-full appearance-none bg-[#262626] [&::-webkit-slider-thumb]:h-[11px] [&::-webkit-slider-thumb]:w-[5px] [&::-webkit-slider-thumb]:appearance-none [&::-webkit-slider-thumb]:bg-[#777]" />
        </div>
        <button type="button" aria-label="Zoom in" className="ml-[5px]">
          <Ico size="h-[9px] w-[9px]" box="0 0 9 9"><path d="M4.500 0v9M0 4.500h9" /></Ico>
        </button>
        <span className="ml-[12px] w-[22px]">80%</span>
      </div>
    </footer>
  );
}

export default function App() {
  return (
    <div className="flex h-screen flex-col overflow-hidden border-l-2 border-[#14181f] bg-[#666666] font-['Open_Sans','Noto_Sans',sans-serif]">
      <TitleBar />
      <Ribbon />
      <FormulaBar />
      <main id="sheet" className="flex min-h-0 flex-1 pr-[3px]">
        <div className="relative min-w-0 flex-1 overflow-hidden border-b border-b-[#999]">
          <Sheet />
          <Ink />
        </div>
        <div className="ml-[3px] flex pt-[2px]">
          <VerticalScroll />
        </div>
      </main>
      <SheetTabs />
      <StatusBar />
    </div>
  );
}
